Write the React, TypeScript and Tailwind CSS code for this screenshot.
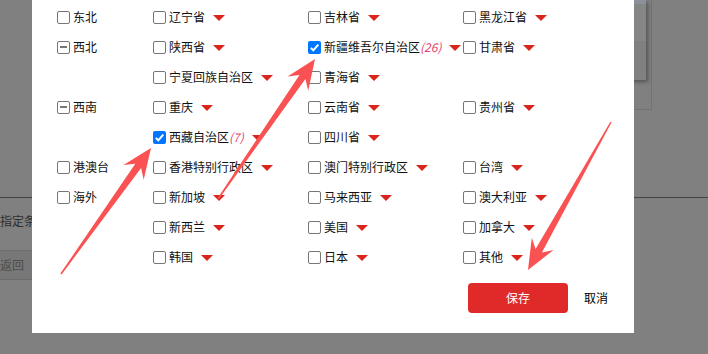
import React from "react";

type Mark = "off" | "on" | "mixed";

type Place = { name: string; checked?: boolean; count?: number };

type Row = { region?: string; mark?: Mark; places: Place[] };

const rows: Row[] = [
  { region: "东北", mark: "off", places: [{ name: "辽宁省" }, { name: "吉林省" }, { name: "黑龙江省" }] },
  {
    region: "西北",
    mark: "mixed",
    places: [{ name: "陕西省" }, { name: "新疆维吾尔自治区", checked: true, count: 26 }, { name: "甘肃省" }]
  },
  { places: [{ name: "宁夏回族自治区" }, { name: "青海省" }] },
  { region: "西南", mark: "mixed", places: [{ name: "重庆" }, { name: "云南省" }, { name: "贵州省" }] },
  { places: [{ name: "西藏自治区", checked: true, count: 7 }, { name: "四川省" }] },
  { region: "港澳台", mark: "off", places: [{ name: "香港特别行政区" }, { name: "澳门特别行政区" }, { name: "台湾" }] },
  { region: "海外", mark: "off", places: [{ name: "新加坡" }, { name: "马来西亚" }, { name: "澳大利亚" }] },
  { places: [{ name: "新西兰" }, { name: "美国" }, { name: "加拿大" }] },
  { places: [{ name: "韩国" }, { name: "日本" }, { name: "其他" }] }
];

function Box({ mark }: { mark: Mark }) {
  if (mark === "on") {
    return (
      <span className="flex h-[13px] w-[13px] shrink-0 items-center justify-center rounded-[2px] bg-[#0075ff]">
        <svg viewBox="0 0 13 13" className="h-[13px] w-[13px]">
          <path d="M2.8 6.9 5.3 9.3 10.3 3.7" fill="none" stroke="#fff" strokeWidth="2" />
        </svg>
      </span>
    );
  }
  return (
    <span className="flex h-[13px] w-[13px] shrink-0 items-center justify-center rounded-[2px] border border-[#767676] bg-white">
      {mark === "mixed" && <span className="h-[1.5px] w-[7px] bg-[#767676]" />}
    </span>
  );
}

function Caret() {
  return (
    <span className="ml-2 mt-px h-0 w-0 shrink-0 border-x-[6px] border-t-[6px] border-x-transparent border-t-[#d9261c]" />
  );
}

function PlaceCell({ place }: { place: Place }) {
  return (
    <div className="flex items-center whitespace-nowrap">
      <Box mark={place.checked ? "on" : "off"} />
      <span className="ml-[3px]">{place.name}</span>
      {place.count !== undefined && (
        <span className="italic text-[#e2456f]">({place.count})</span>
      )}
      <Caret />
    </div>
  );
}

function arrowPoints(x1: number, y1: number, x2: number, y2: number) {
  const dx = x2 - x1;
  const dy = y2 - y1;
  const len = Math.hypot(dx, dy);
  const ux = dx / len;
  const uy = dy / len;
  const px = -uy;
  const py = ux;
  const head = 30;
  const neck = 22;
  const wing = 12.5;
  const shaft = 3.6;
  const tail = 0.7;
  const pt = (bx: number, by: number, off: number) =>
    `${(bx + px * off).toFixed(1)},${(by + py * off).toFixed(1)}`;
  const nx = x2 - ux * neck;
  const ny = y2 - uy * neck;
  const hx = x2 - ux * head;
  const hy = y2 - uy * head;
  return [
    pt(x1, y1, tail),
    pt(nx, ny, shaft),
    pt(hx, hy, wing),
    `${x2},${y2}`,
    pt(hx, hy, -wing),
    pt(nx, ny, -shaft),
    pt(x1, y1, -tail)
  ].join(" ");
}

export default function App() {
  return (
    <div className="relative h-[354px] w-[708px] overflow-hidden bg-[#808080] font-['Noto_Sans_CJK_SC',sans-serif] text-[12px]">
      {/* page behind the mask */}
      <div className="flex h-[197px] justify-end">
        <div className="mr-[56px] h-[110px] w-[120px] border-b border-r border-[#737373]">
          <div className="h-[80px] w-[114px] bg-[#808080] shadow-[2px_2px_4px_rgba(0,0,0,0.35)]">
            <div className="h-[4px] bg-[#8b909c]" />
            <div className="h-[37px] bg-[#868686]" />
          </div>
        </div>
      </div>
      <div className="border-t border-[#444]" />
      <div className="mt-[13px] leading-[20px] text-[#2e2e2e]">指定条件</div>
      <div className="mt-[19px] flex h-[30px] w-[70px] items-center border-y border-r border-[#6c6c6c] bg-[#777] text-[#4c4c4c]">
        返回
      </div>

      {/* modal */}
      <div className="absolute left-[32px] top-0 flex h-[333px] w-[602px] flex-col bg-white pt-[2px] text-[#111]">
        <div className="grid grid-cols-[96px_155px_155px_1fr] pl-[25px]">
          {rows.map((row, i) => (
            <React.Fragment key={i}>
              <div className="flex h-[30px] items-center">
                {row.region && (
                  <>
                    <Box mark={row.mark ?? "off"} />
                    <span className="ml-[3px]">{row.region}</span>
                  </>
                )}
              </div>
              {[0, 1, 2].map((j) => (
                <div key={j} className="flex h-[30px] items-center">
                  {row.places[j] && <PlaceCell place={row.places[j]} />}
                </div>
              ))}
            </React.Fragment>
          ))}
        </div>
        <div className="mt-[11px] flex items-center justify-end gap-4 pr-[26px]">
          <button className="h-[30px] w-[100px] rounded-[4px] bg-[#e02a2a] text-white">保存</button>
          <button className="text-black">取消</button>
        </div>
      </div>

      {/* annotation arrows */}
      <svg className="pointer-events-none absolute inset-0" width="708" height="354">
        <polygon points={arrowPoints(61, 274, 151, 148)} fill="#fa5252" />
        <polygon points={arrowPoints(218, 199, 315, 59)} fill="#fa5252" />
        <polygon points={arrowPoints(611, 122, 528, 270)} fill="#fa5252" />
      </svg>
    </div>
  );
}
